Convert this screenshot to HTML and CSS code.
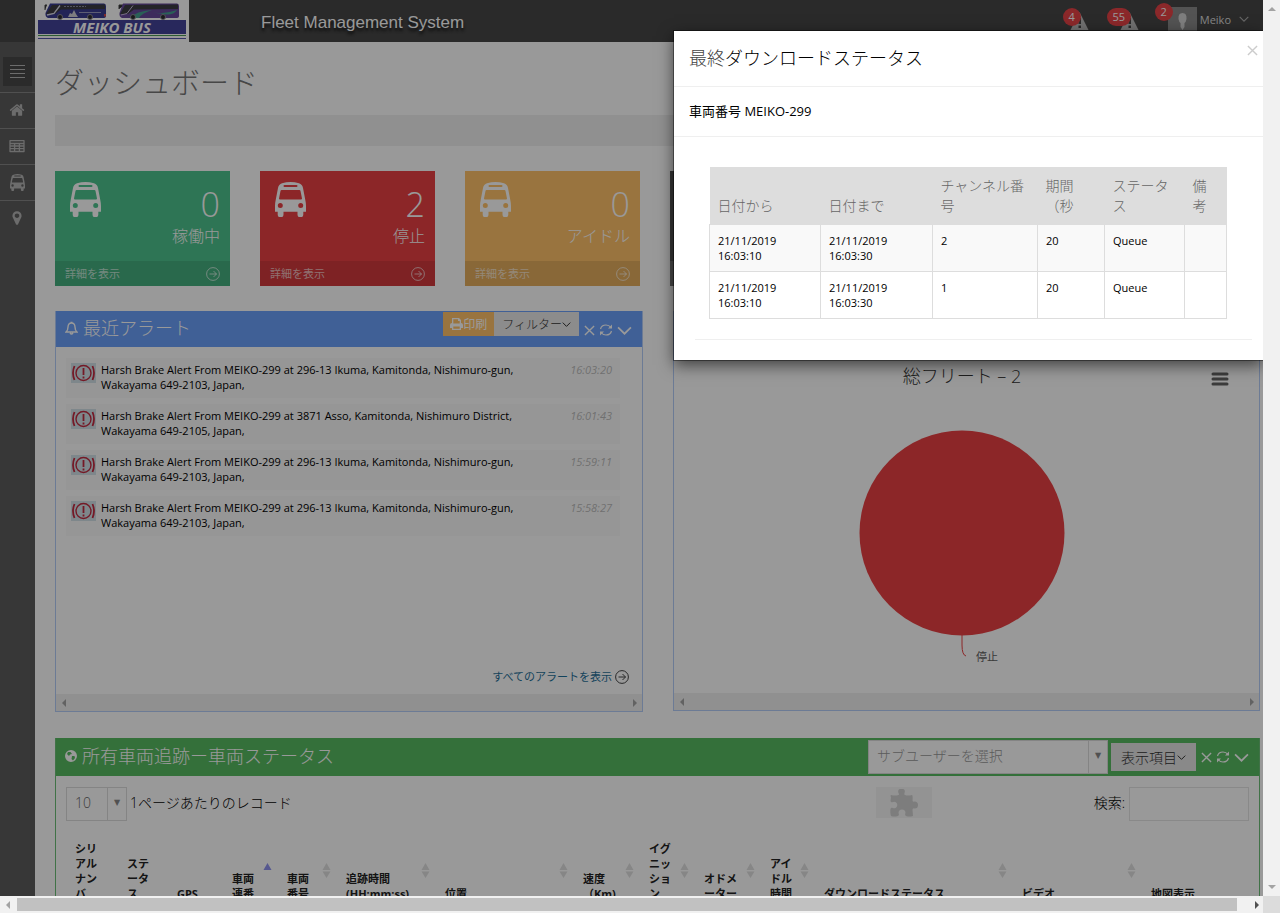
FILE: index.html
```html
<!DOCTYPE html>
<html lang="ja">
<head>
<meta charset="utf-8">
<title>Fleet Management System</title>
<link rel="stylesheet" href="styles.css">
</head>
<body>
<svg class="defs" aria-hidden="true">
  <symbol id="bus" viewBox="0 0 31 35"><path fill-rule="evenodd" d="M7 1.3Q15.500-1.300 24 1.300 27.300 2.300 28 6L30.300 18Q31 21 31 24V29.700H28.300V32.500A2.900 2.900 0 0 1 22.500 32.500V29.700H8.500V32.500A2.900 2.900 0 0 1 2.700 32.500V29.700H0V24Q0 21 .7 18L3 6Q3.700 2.300 7 1.300ZM9.500 3A1 1 0 0 0 9.500 5H21.500A1 1 0 0 0 21.500 3ZM6.500 8Q5.700 8 5.500 9L4 16.500Q4 17.600 5 17.600H26Q27 17.600 27 16.500L25.500 9Q25.300 8 24.500 8ZM5.300 21.100A2.500 2.500 0 1 0 5.300 26.100 2.500 2.500 0 1 0 5.300 21.100ZM25.700 21.100A2.500 2.500 0 1 0 25.700 26.100 2.500 2.500 0 1 0 25.700 21.100Z"/></symbol>
  <symbol id="go" viewBox="0 0 14 14"><g fill="none" stroke="currentColor"><circle cx="7" cy="7" r="6.400"/><path d="M3.500 7H10.500M7.500 4L10.500 7 7.500 10"/></g></symbol>
  <symbol id="close" viewBox="0 0 12 12"><path d="M1 1L11 11M11 1L1 11" fill="none" stroke="currentColor" stroke-width="1.500"/></symbol>
  <symbol id="reload" viewBox="0 0 14 14"><path d="M1.500 6Q2.500 2 7 2 10 2 12 4.500M12.500 8Q11.500 12 7 12 4 12 2 9.500" fill="none" stroke="currentColor" stroke-width="1.200"/><path d="M13 1.500V5.500H9ZM1 12.500V8.500H5Z"/></symbol>
  <symbol id="down" viewBox="0 0 14 8"><path d="M1 1L7 7 13 1" fill="none" stroke="currentColor" stroke-width="1.600"/></symbol>
  <symbol id="warn" viewBox="0 0 18 18"><path fill-rule="evenodd" d="M9 0L18 18H0ZM8 6V12H10.500V6ZM8 13.500V16H10.500V13.500Z"/></symbol>
  <symbol id="brake" viewBox="0 0 25 20"><path fill="#d3e2e8" d="M0 0H25V20H0Z"/><g fill="none" stroke="#c22b40" stroke-width="1.400"><circle cx="12.500" cy="10" r="7.500"/><path d="M12.500 5V12M12.500 13.500V15.500M3.500 3Q.5 10 3.500 17M21.500 3Q24.500 10 21.500 17" stroke-width="1.800"/></g></symbol>
  <symbol id="sort" viewBox="0 0 9 15"><path d="M4.500 0L8.500 7H.5ZM.5 8.500H8.500L4.500 15Z"/></symbol>
</svg>

<div class="window">
  <div class="view">
    <header class="topbar">
      <a class="logo" href="#" aria-label="Meiko Bus">
        <svg width="154" height="42" viewBox="0 0 154 42">
          <path fill="#fff" d="M0 0H154V42H0Z"/>
          <path fill="#3a3d92" d="M15 3.500L69 3.500Q71 3.500 71 6V16Q71 18 68 18H13Q10 17 10.500 13Z"/>
          <path fill="#3c3c44" d="M17 5L70 4.500V9L26 9.500 20 14 11 14Z"/>
          <path fill="#2a2a31" d="M12 5H10V10M90 5H84V9" stroke="#444" stroke-width="1"/>
          <path stroke="#d8dae8" stroke-width="1.300" fill="none" d="M12 15L19 13.500 25 5.500"/>
          <path stroke="#8a8da0" stroke-width="1" stroke-dasharray="2 1" d="M29 6.500H51"/>
          <path stroke="#9a9cc0" stroke-width="1" d="M44 12.500H66"/>
          <path fill="#d0d0d6" d="M33 17L35 13 37 14 39 10 41 14 43 17Z"/><path fill="#d6474a" d="M69 14H71V16.500H69Z"/>
          <path fill="#66489a" d="M88 3.500L142 3.500Q144 3.500 144 6V16Q144 18 141 18H87Q84 17 84.500 13Z"/>
          <path fill="#3c3c44" d="M90 5L143 4.500V9L99 9.500 93 14 85 14Z"/>
          <path fill="#46a092" d="M95 18Q101 11 117 10 107 13 104 18ZM116 12Q128 15 142 10 138 16 128 14 121 13 116 12Z"/>
          <path stroke="#c9b8dd" stroke-width="1" fill="none" d="M86 15L92 13.500 98 5.500"/>
          <g fill="#2a2a2e" stroke="#8a8a92"><circle cx="25" cy="17" r="2.500"/><circle cx="55" cy="17" r="2.500"/><circle cx="98" cy="17" r="2.500"/><circle cx="128" cy="17" r="2.500"/></g>
          <path fill="#43439a" d="M3 20H151V34H3Z"/><path fill="#4b9b55" d="M3 35H151V36H3Z"/><path fill="#5555aa" d="M3 38H151V39H3Z"/>
          <text class="logo-text" x="77" y="33" text-anchor="middle">MEIKO BUS</text>
        </svg>
      </a>
      <span class="brand">Fleet Management System</span>
      <nav class="tools" aria-label="通知">
        <a class="notice" href="#"><svg class="warn"><use href="#warn"/></svg><span class="badge">4</span></a>
        <a class="notice" href="#"><svg class="warn"><use href="#warn"/></svg><span class="badge wide">55</span></a>
        <a class="user" href="#"><svg class="avatar" viewBox="0 0 29 29"><path fill="#8b8b8b" d="M0 0H29V29H0Z"/><path fill="#d2d2d2" d="M14.500 6Q19 6 18.500 12 18 15 16.500 16V20L14.500 23 12.500 20V16Q11 15 10.500 12 10 6 14.500 6Z"/></svg><span class="badge">2</span><span class="name">Meiko<svg class="tiny-down"><use href="#down"/></svg></span></a>
      </nav>
    </header>

    <div class="layout">
      <nav class="sidebar" aria-label="メニュー">
        <button class="toggle" aria-label="メニュー"><svg width="15" height="14"><path d="M0 .5H15M0 4.500H15M0 8.500H15M0 12.500H15" stroke="currentColor"/></svg></button>
        <a href="#" aria-label="ホーム"><svg width="16" height="16" viewBox="0 0 1792 1792"><path d="M1472 992v480q0 26-19 45t-45 19h-384v-384h-256v384h-384q-26 0-45-19t-19-45v-480q0-1 .5-3t.5-3l575-474 575 474q1 2 1 6zm223-69l-62 74q-8 9-21 11h-3q-13 0-21-7l-692-577-692 577q-12 8-24 7-13-2-21-11l-62-74q-8-10-7-23.500t11-21.500l719-599q32-26 76-26t76 26l244 204v-195q0-14 9-23t23-9h192q14 0 23 9t9 23v408l219 182q10 8 11 21.500t-7 23.500z"/></svg></a>
        <a href="#" aria-label="表"><svg width="16" height="14"><path d="M1 1.700H15V12.500H1ZM1 4.500H15M1 7H15M1 9.700H15M5.600 4V13M10.400 4V13" fill="none" stroke="currentColor" stroke-width="1.300" stroke-linejoin="round"/></svg></a>
        <a href="#" aria-label="車両"><svg width="15" height="17"><use href="#bus"/></svg></a>
        <a href="#" aria-label="地図"><svg width="16" height="16" viewBox="0 0 1792 1792"><path d="M1152 640q0-106-75-181t-181-75-181 75-75 181 75 181 181 75 181-75 75-181zm256 0q0 109-33 179l-364 774q-16 33-47.500 52t-67.500 19-67.500-19-46.500-52l-365-774q-33-70-33-179 0-212 150-362t362-150 362 150 150 362z"/></svg></a>
      </nav>

      <main class="content">
        <h1>ダッシュボード</h1>
        <div class="crumbs"></div>

        <section class="cards">
          <article class="card green"><div class="card-body"><svg class="bus"><use href="#bus"/></svg><div class="stat"><strong>0</strong><span>稼働中</span></div></div><a class="more" href="#">詳細を表示<svg class="go"><use href="#go"/></svg></a></article>
          <article class="card red"><div class="card-body"><svg class="bus"><use href="#bus"/></svg><div class="stat"><strong>2</strong><span>停止</span></div></div><a class="more" href="#">詳細を表示<svg class="go"><use href="#go"/></svg></a></article>
          <article class="card amber"><div class="card-body"><svg class="bus"><use href="#bus"/></svg><div class="stat"><strong>0</strong><span>アイドル</span></div></div><a class="more" href="#">詳細を表示<svg class="go"><use href="#go"/></svg></a></article>
          <article class="card dark"><div class="card-body"></div><div class="more"></div></article>
        </section>

        <section class="panels">
          <article class="panel blue">
            <header class="panel-head">
              <h2><svg class="bell" viewBox="0 0 13 14"><path d="M1 11Q3 9.500 3 6 3.200 2 6.500 2 9.800 2 10 6 10 9.500 12 11ZM5.500 1.500H7.500M5 12Q6.500 14 8 12" fill="none" stroke="currentColor" stroke-width="1.400"/></svg>最近アラート</h2>
              <div class="head-tools top">
                <div class="pair"><button class="print"><svg width="13" height="12" viewBox="0 0 13 12"><path fill-rule="evenodd" d="M3 0H9L11 2V5Q13 5 13 7V10H11V12H2V10H0V7Q0 5 2 5V0ZM3.300 1.300V5.500H9.700V3H8V1.300ZM3.300 8.500V10.700H9.700V8.500Z"/></svg>印刷</button><button class="filter">フィルター<svg class="mini-down"><use href="#down"/></svg></button></div>
                <div class="acts"><button aria-label="閉じる"><svg class="x"><use href="#close"/></svg></button><button aria-label="更新"><svg class="re"><use href="#reload"/></svg></button><button aria-label="折りたたむ"><svg class="dn"><use href="#down"/></svg></button></div>
              </div>
            </header>
            <div class="panel-body">
              <ul class="alerts">
                <li><svg class="brake"><use href="#brake"/></svg><p>Harsh Brake Alert From MEIKO-299 at 296-13 Ikuma, Kamitonda, Nishimuro-gun,<br>Wakayama 649-2103, Japan,</p><time>16:03:20</time></li>
                <li><svg class="brake"><use href="#brake"/></svg><p>Harsh Brake Alert From MEIKO-299 at 3871 Asso, Kamitonda, Nishimuro District,<br>Wakayama 649-2105, Japan,</p><time>16:01:43</time></li>
                <li><svg class="brake"><use href="#brake"/></svg><p>Harsh Brake Alert From MEIKO-299 at 296-13 Ikuma, Kamitonda, Nishimuro-gun,<br>Wakayama 649-2103, Japan,</p><time>15:59:11</time></li>
                <li><svg class="brake"><use href="#brake"/></svg><p>Harsh Brake Alert From MEIKO-299 at 296-13 Ikuma, Kamitonda, Nishimuro-gun,<br>Wakayama 649-2103, Japan,</p><time>15:58:27</time></li>
              </ul>
              <a class="all" href="#">すべてのアラートを表示<svg class="go"><use href="#go"/></svg></a>
            </div>
            <div class="inner-scroll"><i class="arrow left"></i><i class="arrow right"></i></div>
          </article>

          <article class="panel blue chart-panel">
            <header class="panel-head"></header>
            <div class="chart">
              <div class="chart-head"><h3>総フリート – 2</h3><button class="chart-menu" aria-label="メニュー"><svg width="18" height="14"><path d="M2 2H16M2 7H16M2 12H16" stroke="currentColor" stroke-width="3" stroke-linecap="round"/></svg></button></div>
              <svg class="pie" width="206" height="240" viewBox="0 0 206 240"><circle cx="103" cy="103" r="102.500" fill="#ea4043"/><path d="M103 205V215Q103 225 107 226" fill="none" stroke="#ea4043"/><text x="117" y="231">停止</text></svg>
            </div>
            <div class="inner-scroll"><i class="arrow left"></i><i class="arrow right"></i></div>
          </article>
        </section>

        <section class="panel lime">
          <header class="panel-head">
            <h2><svg class="globe" viewBox="0 0 12 12"><path fill-rule="evenodd" d="M6 0A6 6 0 1 1 6 12 6 6 0 1 1 6 0ZM3 2L2 4 4 6 5 4.500 7 4 5.500 2ZM7 6L6.500 9 8 10.500 10 8 9.500 6Z"/></svg>所有車両追跡ー車両ステータス</h2>
            <div class="head-tools">
              <span class="select sub"><select aria-label="サブユーザーを選択"><option>サブユーザーを選択</option></select></span>
              <button class="columns">表示項目<svg class="mini-down"><use href="#down"/></svg></button>
              <div class="acts"><button aria-label="閉じる"><svg class="x"><use href="#close"/></svg></button><button aria-label="更新"><svg class="re"><use href="#reload"/></svg></button><button aria-label="折りたたむ"><svg class="dn"><use href="#down"/></svg></button></div>
            </div>
          </header>
          <div class="fleet">
            <div class="fleet-tools">
              <label class="records"><span class="select"><select><option>10</option></select></span>1ページあたりのレコード</label>
              <button class="plugin" aria-label="プラグイン"><svg width="28" height="28" viewBox="0 0 28 28"><path d="M1 8Q0 7 1 6 5 7 8.500 6 9.500 5.500 8.500 4A3.300 3.300 0 1 1 14.500 4Q14 5.500 15 6 18 7 22 6 23 6.500 22.500 11 22.500 13.500 24.500 12.500A3.400 3.400 0 1 1 24.500 19.500Q22.500 18.500 22.500 21L23 27Q19 28 16 27 14.500 26 15.500 24A3.200 3.200 0 1 0 8.500 24Q9.500 26 8 27 4 28 1 27 0 25 .5 20 1 18 3 19A3.200 3.200 0 1 0 3 13Q1 14 .5 12Z"/></svg></button>
              <label class="search">検索:<input type="text"></label>
            </div>
            <table class="fleet-table">
              <colgroup><col class="w52"><col class="w50"><col class="w55"><col class="w55"><col class="w59"><col class="w99"><col class="w138"><col class="w66"><col class="w55"><col class="w66"><col class="w54"><col class="w198"><col class="w129"><col></colgroup>
              <thead><tr>
                <th>シリ<br>アル<br>ナン<br>バ</th>
                <th>ステ<br>ータ<br>ス</th>
                <th>GPS</th>
                <th>車両<br>連番<svg class="sort asc" viewBox="0 0 9 15"><path d="M4.500 0L8.500 7H.5Z"/></svg></th>
                <th>車両<br>番号<svg class="sort"><use href="#sort"/></svg></th>
                <th>追跡時間<br>(HH:mm:ss)<svg class="sort"><use href="#sort"/></svg></th>
                <th>位置<svg class="sort"><use href="#sort"/></svg></th>
                <th>速度<br>（Km)<svg class="sort"><use href="#sort"/></svg></th>
                <th>イグ<br>ニッ<br>ショ<br>ン<svg class="sort"><use href="#sort"/></svg></th>
                <th>オドメ<br>ーター<svg class="sort"><use href="#sort"/></svg></th>
                <th>アイ<br>ドル<br>時間<svg class="sort"><use href="#sort"/></svg></th>
                <th>ダウンロードステータス<svg class="sort"><use href="#sort"/></svg></th>
                <th>ビデオ<svg class="sort"><use href="#sort"/></svg></th>
                <th>地図表示</th>
              </tr></thead>
            </table>
          </div>
        </section>
      </main>
    </div>

    <div class="backdrop"></div>
    <section class="modal" role="dialog" aria-labelledby="dlg">
      <header class="modal-head"><h2 id="dlg"><span>最終</span>ダウンロードステータス</h2><button class="modal-close" aria-label="閉じる"><svg class="x"><use href="#close"/></svg></button></header>
      <p class="vehicle">車両番号 MEIKO-299</p>
      <div class="modal-body">
        <table class="status">
          <colgroup><col class="w111"><col class="w112"><col class="w105"><col class="w67"><col class="w80"><col></colgroup>
          <thead><tr><th>日付から</th><th>日付まで</th><th>チャンネル番号</th><th>期間<br>（秒</th><th>ステータス</th><th>備考</th></tr></thead>
          <tbody>
            <tr><td>21/11/2019<br>16:03:10</td><td>21/11/2019<br>16:03:30</td><td>2</td><td>20</td><td>Queue</td><td></td></tr>
            <tr><td>21/11/2019<br>16:03:10</td><td>21/11/2019<br>16:03:30</td><td>1</td><td>20</td><td>Queue</td><td></td></tr>
          </tbody>
        </table>
      </div>
      <hr>
    </section>
  </div>
  <div class="vbar"><i class="arrow up"></i><i class="arrow down"></i></div>
  <div class="hbar"><i class="arrow left"></i><div class="thumb"></div><i class="arrow right strong"></i></div>
  <div class="corner"></div>
</div>
</body>
</html>
```
FILE: styles.css
```css
* { box-sizing: border-box; }
body { margin: 0; font-family: "Open Sans", "Noto Sans CJK JP", sans-serif; font-size: 11px; line-height: 15px; color: #000; }
h1, h2, h3, p, ul { margin: 0; padding: 0; font-weight: 300; }
a { color: inherit; text-decoration: none; }
button { margin: 0; padding: 0; border: 0; background: none; color: inherit; font: inherit; display: flex; align-items: center; }
svg { display: block; fill: currentColor; flex: none; }
.defs { position: absolute; width: 0; height: 0; }

.window { display: grid; grid-template: minmax(0, 1fr) 17px / minmax(0, 1fr) 17px; height: 100vh; overflow: hidden; }
.view { position: relative; overflow: hidden; background: #fff; display: flex; flex-direction: column; }

/* top bar */
.topbar { display: flex; align-items: center; height: 42px; flex: none; padding-left: 35px; background: #464646; color: #fff; }
.brand { margin-left: 72px; padding-top: 3px; font: 17px/20px "Liberation Sans", Arial, sans-serif; color: #fff; text-shadow: 0 3px 3px #111; }
.logo-text { font: italic bold 15px "Open Sans", sans-serif; fill: #fff; }
.tools { display: flex; align-items: center; gap: 31px; margin-left: auto; padding-right: 14px; }
.notice, .user { position: relative; display: flex; align-items: center; color: #bbb; }
.notice { left: 2px; }
.warn { width: 19px; height: 18px; }
.badge { position: absolute; left: -7px; top: -4px; min-width: 18px; height: 18px; padding: 0 5px; border-radius: 9px; background: #e84347; color: #fff; line-height: 18px; text-align: center; }
.badge.wide { left: -13px; min-width: 24px; }
.user .badge { left: -13px; top: -4px; }
.avatar { width: 29px; height: 29px; margin-right: 3px; }
.user { color: #ddd; }
.name { display: flex; align-items: center; padding-bottom: 4px; }
.tiny-down { width: 10px; height: 6px; margin-left: 8px; color: #aaa; }

/* side bar */
.layout { display: flex; flex: 1; }
.sidebar { width: 35px; flex: none; background: #5d5d5d; color: #b4b4b4; }
.sidebar a { display: flex; align-items: center; justify-content: center; height: 36px; padding: 0 1px 1px 0; border-top: 1px solid #858585; }
.toggle { width: 29px; height: 29px; margin: 15px 3px 6px; justify-content: center; background: #484848; }

/* content */
.content { flex: 1; min-width: 0; padding: 21px 3px 0 20px; }
h1 { height: 40px; margin-bottom: 12px; font-size: 29px; line-height: 40px; color: #777; }
.crumbs { height: 31px; margin-bottom: 25px; background: #f1f1f1; }
.cards { display: flex; gap: 30px; margin-bottom: 25px; }
.card { width: 175px; color: #fff; flex: none; }
.card-body { display: flex; justify-content: space-between; height: 90px; padding: 11px 10px 0 15px; }
.bus { width: 31px; height: 35px; }
.stat { display: flex; flex-direction: column; align-items: flex-end; padding-top: 2px; font-weight: 300; }
.stat strong { font-size: 34px; line-height: 40px; font-weight: 300; }
.stat span { font-size: 16px; line-height: 24px; }
.more { display: flex; align-items: center; justify-content: space-between; height: 25px; padding: 0 10px; color: #ffffffaa; background: #0000001a; }
.go { width: 14px; height: 14px; }
.green { background: #4dc48e; }
.red { background: #ea4043; }
.amber { background: #ffc269; }
.dark { background: #5a5a5a; }
.dark .more { background: #ffffff33; }

.panels { display: grid; grid-template-columns: 588fr 587fr; gap: 30px; margin-bottom: 26px; }
.panel { display: flex; flex-direction: column; border: 1px solid #b4cef8; border-top: 0; }
.panel-head { display: flex; justify-content: space-between; min-height: 36px; padding: 0 10px 0 9px; color: #fff; }
.panel-head h2 { display: flex; align-items: center; gap: 5px; padding-bottom: 2px; font-size: 18px; line-height: 24px; }
.blue .panel-head { background: #6ba0fa; }
.bell { width: 13px; height: 14px; }
.head-tools { display: flex; align-items: center; gap: 3px; }
.head-tools.top { align-items: flex-start; padding-top: 1px; gap: 5px; }
.pair { display: flex; }
.print { height: 24px; padding: 0 7px 0 7px; background: #ffc269; font-size: 12px; }
.filter { height: 24px; padding: 0 8px; background: #e9e9e9; color: #333; font-size: 12px; font-weight: 300; }
.mini-down { width: 9px; height: 5px; }
.acts { display: flex; align-items: center; gap: 4px; }
.top .acts { padding-top: 11px; }
.x { width: 11px; height: 11px; }
.re { width: 14px; height: 14px; }
.dn { width: 15px; height: 9px; }

.panel-body { display: flex; flex-direction: column; flex: 1; padding: 11px 13px 10px 10px; }
.alerts { list-style: none; display: flex; flex-direction: column; gap: 6px; margin-right: 9px; }
.alerts li { display: flex; align-items: flex-start; height: 40px; padding: 4px 8px 0 5px; background: #fbfbfb; }
.brake { width: 25px; height: 20px; margin: 1px 5px 0 0; }
.alerts p { font-weight: 400; flex: 1; }
.alerts time { font-style: italic; font-weight: 400; color: #bbb; }
.all { display: flex; align-items: center; align-self: flex-end; gap: 3px; margin-top: auto; color: #1f7099; }
.all .go { color: #444; }
.inner-scroll { display: flex; justify-content: space-between; align-items: center; height: 17px; padding: 0 5px 0 6px; background: #f1f1f1; }
.arrow { width: 0; height: 0; border: 4px solid transparent; }
.arrow.left { border-left: 0; border-right-color: #a3a3a3; }
.arrow.right { border-right: 0; border-left-color: #a3a3a3; }
.arrow.up { border-top: 0; border-bottom-color: #a3a3a3; }
.arrow.down { border-bottom: 0; border-top-color: #a3a3a3; }
.arrow.strong { border-left-color: #505050; }

.chart-panel { margin-bottom: 1px; }
.chart { height: 346px; padding: 17px 19px 0 10px; }
.chart-head { display: grid; grid-template-columns: 40px 1fr 40px; align-items: center; height: 24px; }
.chart-head h3 { grid-column: 2; text-align: center; font-size: 18px; line-height: 24px; color: #333; }
.chart-menu { justify-self: center; padding-top: 6px; color: #646464; }
.pie { margin: 42px auto 0; overflow: visible; }
.pie text { font-size: 11px; fill: #606060; }

/* fleet */
.lime { border-color: #6cbf77; }
.lime .panel-head { min-height: 38px; background: #58bb62; }
.globe { width: 12px; height: 12px; }
.select { position: relative; display: inline-flex; height: 34px; border: 1px solid #dcdcdc; background: #fff; }
.select::after { content: "▼"; display: flex; align-items: center; justify-content: center; width: 18px; padding-bottom: 3px; border-left: 1px solid #dcdcdc; color: #888; font: 8px "DejaVu Sans", sans-serif; }
select { appearance: none; border: 0; margin: 0; padding: 0 8px 2px; flex: 1; width: 40px; background: none; font: 300 14px/20px "Open Sans", "Noto Sans CJK JP", sans-serif; color: #666; }
.sub { width: 240px; }
.sub select { color: #999; }
.columns { height: 28px; margin-right: 2px; padding: 0 10px; background: #e4e4e4; color: #333; font-size: 14px; font-weight: 300; }
.fleet { padding: 11px 10px 0; }
.fleet-tools { display: flex; align-items: flex-start; height: 34px; margin-bottom: 20px; font-size: 14px; line-height: 32px; font-weight: 300; }
.records { display: flex; gap: 3px; }
.plugin { width: 56px; height: 31px; margin-left: auto; margin-right: 162px; justify-content: center; background: #f5f5f5; color: #d0d0d0; }
.search { display: flex; gap: 4px; }
.search input { width: 120px; height: 34px; border: 1px solid #e4e4e4; background: #fff; }
table { table-layout: fixed; width: 100%; border-collapse: collapse; }
th, td { text-align: left; }
.fleet-table th { position: relative; padding: 0 0 0 9px; vertical-align: bottom; font-weight: 700; color: #222; white-space: nowrap; }
.sort { position: absolute; top: 22px; right: 6px; width: 9px; height: 15px; color: #e0e0e0; }
.sort.asc { color: #8f93ef; }
.w50 { width: 50px; } .w52 { width: 52px; } .w54 { width: 54px; } .w55 { width: 55px; } .w59 { width: 59px; }
.w66 { width: 66px; } .w67 { width: 67px; } .w80 { width: 80px; } .w99 { width: 99px; } .w105 { width: 105px; }
.w111 { width: 111px; } .w112 { width: 112px; } .w129 { width: 129px; } .w138 { width: 138px; } .w198 { width: 198px; }

/* dialog */
.backdrop { position: absolute; inset: 0; background: rgba(0, 0, 0, .4); }
.modal { position: absolute; top: 31px; right: 0; width: 589px; max-width: 100%; padding-bottom: 20px; background: #fff; box-shadow: 0 5px 15px rgba(0, 0, 0, .6), 0 0 0 1px rgba(0, 0, 0, .4); }
.modal-head { display: flex; justify-content: space-between; align-items: flex-start; padding: 14px 5px 14px 15px; border-bottom: 1px solid #efefef; }
.modal-head h2 { font-size: 18px; line-height: 27px; }
.modal-head h2 span { color: #444; }
.modal-close { color: #ccc; }
.vehicle { padding: 15px; border-bottom: 1px solid #efefef; font-size: 13px; line-height: 19px; font-weight: 400; }
.modal-body { padding: 30px 36px 20px 35px; }
.status th { height: 57px; padding: 8px; vertical-align: bottom; background: #ddd; color: #666; font-size: 14px; line-height: 20px; font-weight: 300; }
.status td { height: 47px; padding: 8px; vertical-align: top; border: 1px solid #ddd; }
.status tbody tr:first-child { background: #f9f9f9; }
.modal hr { margin: 0 11px 0 21px; border: 0; border-top: 1px solid #efefef; }

/* scroll bars */
.vbar { display: flex; flex-direction: column; align-items: center; justify-content: space-between; padding: 7px 0; background: #f1f1f1; }
.hbar { display: flex; align-items: center; padding: 0 4px 0 6px; background: #f1f1f1; }
.thumb { flex: 1; height: 13px; margin: 0 18px 0 7px; background: #c1c1c1; }
.corner { background: #dcdcdc; }
```
